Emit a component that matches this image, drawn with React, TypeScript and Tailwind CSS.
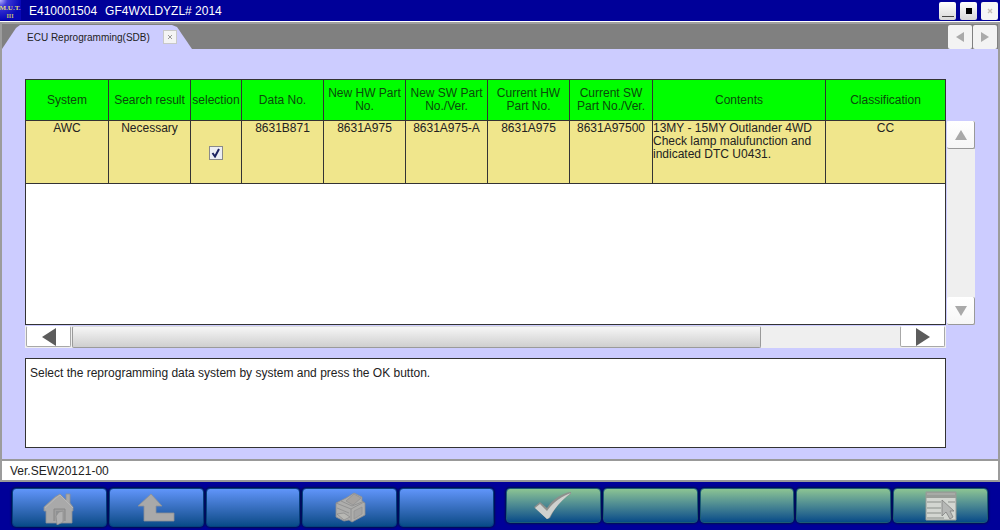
import type { ReactNode } from "react";

const columns = [
  { label: "System", width: "w-[83px]" },
  { label: "Search result", width: "w-[82px]" },
  { label: "selection", width: "w-[51px]" },
  { label: "Data No.", width: "w-[82px]" },
  { label: "New HW Part No.", width: "w-[82px]" },
  { label: "New SW Part No./Ver.", width: "w-[82px]" },
  { label: "Current HW Part No.", width: "w-[82px]" },
  { label: "Current SW Part No./Ver.", width: "w-[83px]" },
  { label: "Contents", width: "w-auto" },
  { label: "Classification", width: "w-[119px]" },
];

const rows = [
  {
    system: "AWC",
    result: "Necessary",
    selected: true,
    data: "8631B871",
    newHw: "8631A975",
    newSw: "8631A975-A",
    currentHw: "8631A975",
    currentSw: "8631A97500",
    contents: "13MY - 15MY Outlander 4WD Check lamp malufunction and indicated DTC U0431.",
    classification: "CC",
  },
];

function HomeIcon() {
  return (
    <svg width="32" height="34" viewBox="0 0 32 34" aria-hidden>
      <path d="M23 9V3h4v9l3 4v4h-1v12H3V20H1v-4L12 6l5-3z" fill="#a9a9a9" stroke="#8e9196" strokeWidth=".8" />
      <path d="M2 17 13 7l4-3 13 13" fill="none" stroke="#bcbcbc" strokeWidth=".8" />
      <path d="M11 30V18h11v12" fill="#9f9f9f" stroke="#878787" />
      <path d="M13 30V20h7v10z" fill="#8f9193" />
      <path d="m13 25 3-4 4-1v11l-6 3z" fill="#b1b1b1" stroke="#8c8c8c" strokeWidth=".7" />
    </svg>
  );
}

function ReturnIcon() {
  return (
    <svg width="38" height="30" viewBox="0 0 38 30" aria-hidden>
      <path d="M14 1 25 13h-6v7h18v8H7V13H1z" fill="#a9a9a9" stroke="#8d9096" strokeWidth=".8" />
    </svg>
  );
}

function PrinterIcon() {
  return (
    <svg width="32" height="32" viewBox="0 0 32 32" aria-hidden>
      <path d="m2 11 10-5 8-5 8 4v4l3 2v12l-13 7-3-2-5 1-8-4z" fill="#aeaeac" stroke="#8b8d90" strokeWidth=".8" />
      <path d="m12 9 8-7 7 4-8 7z" fill="#a6a3a0" stroke="#929292" strokeWidth=".8" />
      <path d="m2 11 15 6 13-7M17 17v12M7 9l11 5 10-4" fill="none" stroke="#8c8c8c" strokeWidth=".8" />
      <path d="m20 19 8-4v7l-8 5z" fill="#a4a4a4" stroke="#969696" strokeWidth=".8" />
      <path d="m3 16 12 5M3 22l7-1 6 4-6 3z" fill="#b8b8b4" stroke="#8e8e8e" strokeWidth=".8" />
    </svg>
  );
}

function CheckIcon() {
  return (
    <svg width="40" height="30" viewBox="0 0 40 30" className="-translate-y-px" aria-hidden>
      <path d="M1 17 7 12l7 6C20 9 29 3 38 2v2C29 9 22 17 17 28l-3 1z" fill="#8d908c" />
      <path d="m2 18 5-4 7 7C20 12 29 6 38 3 30 9 22 17 16 28l-2 1z" fill="#cfd1ce" />
    </svg>
  );
}

function ListIcon() {
  return (
    <svg width="32" height="30" viewBox="0 0 32 30" aria-hidden>
      <path d="M1 1h30v28H1z" fill="#d3d6d1" stroke="#969b96" />
      <path d="M1 1h30v6H1z" fill="#999d98" />
      <path d="M2 3h28" stroke="#b6b8b4" />
      <path d="M2 11h14M2 17h14M2 22h14M2 27h17M23 11h7" stroke="#8b8f8b" strokeWidth="1.2" />
      <path d="M17 9v16l4-4 4 7 3-2-3-6h4z" fill="#b5b7b5" stroke="#808280" strokeWidth=".8" />
    </svg>
  );
}

const blueKeys: { name: string; icon?: ReactNode }[] = [
  { name: "Home", icon: <HomeIcon /> },
  { name: "Back", icon: <ReturnIcon /> },
  { name: "Function 3" },
  { name: "Print", icon: <PrinterIcon /> },
  { name: "Function 5" },
];

const greenKeys: { name: string; icon?: ReactNode }[] = [
  { name: "OK", icon: <CheckIcon /> },
  { name: "Function 7" },
  { name: "Function 8" },
  { name: "Function 9" },
  { name: "List", icon: <ListIcon /> },
];

function TitleBar() {
  return (
    <header className="flex h-[22px] shrink-0 items-center border-b border-white bg-[#000099] text-white">
      <svg width="21" height="20" viewBox="0 0 21 20" className="self-start" aria-hidden>
        <defs>
          <radialGradient id="glow" cx="0" cy="0" r="1">
            <stop offset="0" stopColor="#b9b4ff" />
            <stop offset=".35" stopColor="#3c38d8" />
            <stop offset="1" stopColor="#0808b8" />
          </radialGradient>
        </defs>
        <rect width="21" height="20" fill="url(#glow)" />
        <text x="10" y="10" textAnchor="middle" fontFamily="Liberation Serif, serif" fontWeight="700" fontSize="7" fill="#e0da7c">
          M.U.T.
        </text>
        <text x="10" y="18" textAnchor="middle" fontFamily="Liberation Serif, serif" fontWeight="700" fontSize="6" fill="#c9c46a">
          III
        </text>
      </svg>
      <h1 className="ml-2 flex gap-2 text-xs">
        <span>E410001504</span>
        <span>GF4WXLDYZL# 2014</span>
      </h1>
      <div className="ml-auto flex gap-1 pr-0.5">
        <button aria-label="Minimize" className="flex h-[18px] w-[17px] items-end justify-center rounded-xs bg-linear-to-b from-white to-[#d8d8d8] pb-[3px]">
          <span className="h-px w-3 bg-[#444]" />
        </button>
        <button aria-label="Maximize" className="grid h-[18px] w-[17px] place-items-center rounded-xs bg-linear-to-b from-white to-[#d8d8d8]">
          <span className="size-1.5 bg-black" />
        </button>
        <button aria-label="Close" className="grid h-[18px] w-[17px] place-items-center rounded-xs bg-[#f6f6f6]">
          <svg width="6" height="6" viewBox="0 0 6 6" aria-hidden>
            <path d="m1 1 4 4M5 1 1 5" stroke="#c6c0b8" strokeWidth="1.4" />
          </svg>
        </button>
      </div>
    </header>
  );
}

function TabBar() {
  return (
    <nav className="flex h-[27px] shrink-0 items-end justify-between border-t-2 border-[#a0a0a0] bg-[#808080]">
      <div className="flex h-6 w-[190px] items-center justify-between bg-[#ccccff] pr-[15px] pl-[25px] [clip-path:polygon(0_100%,14px_3px,18px_0,170px_0,175px_2px,100%_100%)]">
        <a href="#sdb" className="text-[10px] text-[#222]">
          ECU Reprogramming(SDB)
        </a>
        <button aria-label="Close tab" className="grid size-3.5 place-items-center border border-[#c8c8c8] bg-[#f4f4f4]">
          <svg width="6" height="6" viewBox="0 0 6 6" aria-hidden>
            <path d="m1 1 4 4M5 1 1 5" stroke="#999" />
          </svg>
        </button>
      </div>
      <div className="flex gap-px pr-px">
        <button aria-label="Previous tab" className="grid size-6 place-items-center rounded-xs bg-[#f3f3f3]">
          <svg width="8" height="10" viewBox="0 0 8 10" aria-hidden>
            <path d="M8 0v10L0 5z" fill="#aaa" />
          </svg>
        </button>
        <button aria-label="Next tab" className="grid size-6 place-items-center rounded-xs bg-[#f3f3f3]">
          <svg width="8" height="10" viewBox="0 0 8 10" aria-hidden>
            <path d="M0 0v10l8-5z" fill="#aaa" />
          </svg>
        </button>
      </div>
    </nav>
  );
}

function DataTable() {
  return (
    <table className="w-full table-fixed border-separate border-spacing-0 text-center text-xs leading-[13px]">
      <thead>
        <tr className="h-[41px] bg-[#00ff00] text-[#0b4a0b]">
          {columns.map((c) => (
            <th key={c.label} scope="col" className={`border-r border-b border-[#333] p-0 font-normal last:border-r-0 ${c.width}`}>
              {c.label}
            </th>
          ))}
        </tr>
      </thead>
      <tbody>
        {rows.map((r) => (
          <tr
            key={r.data}
            className="h-[63px] bg-[#f0e68c] align-top text-[#222] [&>td]:border-r [&>td]:border-b [&>td]:border-[#333] [&>td]:p-0 [&>td]:pt-px [&>td:last-child]:border-r-0"
          >
            <td>{r.system}</td>
            <td>{r.result}</td>
            <td className="align-middle">
              <label className="relative inline-grid size-3.5 place-items-center align-middle">
                <input
                  type="checkbox"
                  aria-label={`Select ${r.data}`}
                  defaultChecked={r.selected}
                  className="peer size-3.5 appearance-none border border-[#8a8a8a] bg-[#eceef4]"
                />
                <svg width="10" height="10" viewBox="0 0 10 10" className="absolute hidden peer-checked:block" aria-hidden>
                  <path d="m1.5 5 2.5 3.5L8 1" fill="none" stroke="#1c2260" strokeWidth="2" />
                </svg>
              </label>
            </td>
            <td>{r.data}</td>
            <td>{r.newHw}</td>
            <td>{r.newSw}</td>
            <td>{r.currentHw}</td>
            <td>{r.currentSw}</td>
            <td className="text-left">{r.contents}</td>
            <td>{r.classification}</td>
          </tr>
        ))}
      </tbody>
    </table>
  );
}

function VerticalScroll() {
  return (
    <div className="mt-[42px] flex w-7 shrink-0 flex-col justify-between bg-[#efefef]">
      <button aria-label="Scroll up" className="grid h-7 place-items-center rounded-xs border-r border-b border-[#999] bg-linear-to-b from-white to-[#f6f6f6]">
        <svg width="12" height="10" viewBox="0 0 12 10" aria-hidden>
          <path d="M6 0 12 10H0z" fill="#a9a9a9" />
        </svg>
      </button>
      <button aria-label="Scroll down" className="grid h-7 place-items-center rounded-xs border-r border-b border-[#999] bg-linear-to-b from-white to-[#f6f6f6]">
        <svg width="12" height="10" viewBox="0 0 12 10" aria-hidden>
          <path d="M0 0h12L6 10z" fill="#a9a9a9" />
        </svg>
      </button>
    </div>
  );
}

function HorizontalScroll() {
  return (
    <div className="mt-px flex h-[22px] shrink-0 justify-between bg-[#efefef] px-px">
      <button aria-label="Scroll left" className="grid h-[21px] w-[45px] place-items-center rounded-xs border border-[#a8a8a8] border-t-white bg-white">
        <svg width="14" height="18" viewBox="0 0 14 18" aria-hidden>
          <path d="M14 0v18L0 9z" fill="#5c5c5c" />
        </svg>
      </button>
      <div className="mx-px flex-1">
        <div className="h-full w-5/6 rounded-xs border border-[#9a9a9a] border-t-[#ddd] bg-linear-to-b from-[#f6f6f6] to-[#cfcfcf]" />
      </div>
      <button aria-label="Scroll right" className="grid h-[21px] w-[45px] place-items-center rounded-xs border border-[#a8a8a8] border-t-white bg-white">
        <svg width="14" height="18" viewBox="0 0 14 18" aria-hidden>
          <path d="M0 0v18l14-9z" fill="#5c5c5c" />
        </svg>
      </button>
    </div>
  );
}

function FunctionKeys() {
  return (
    <footer className="flex h-12 shrink-0 gap-3 bg-[#000099] px-3 pt-1.5">
      <div className="grid h-[39px] flex-1 grid-cols-5 gap-0.5">
        {blueKeys.map((k) => (
          <button
            key={k.name}
            aria-label={k.name}
            className="grid place-items-center rounded-sm border border-[#06407c] bg-linear-to-b from-[#6095fa] to-[#064b88] shadow-[0_0_2px_1px_#00104f]"
          >
            {k.icon}
          </button>
        ))}
      </div>
      <div className="grid h-[35px] flex-1 grid-cols-5 gap-0.5">
        {greenKeys.map((k) => (
          <button
            key={k.name}
            aria-label={k.name}
            className="grid place-items-center rounded-sm border border-[#1c5c74] bg-linear-to-b from-[#8cc492] to-[#064b88] shadow-[0_0_2px_1px_#00104f]"
          >
            {k.icon}
          </button>
        ))}
      </div>
    </footer>
  );
}

export default function App() {
  return (
    <div className="flex h-screen min-h-[480px] flex-col overflow-hidden bg-[#000099] font-['Liberation_Sans',Arial,sans-serif] text-[#222]">
      <TitleBar />
      <div className="flex min-h-0 flex-1 flex-col border-x-2 border-[#9c9c9c]">
        <TabBar />
        <main id="sdb" className="flex min-h-0 flex-1 flex-col bg-[#ccccff] pt-[30px] pr-[23px] pb-[11px] pl-[23px]">
          <div className="flex min-h-0 flex-1 gap-px">
            <div className="min-w-0 flex-1 border border-[#333] bg-white">
              <DataTable />
            </div>
            <VerticalScroll />
          </div>
          <div className="mr-[29px] flex shrink-0 flex-col gap-2.5">
            <HorizontalScroll />
            <p className="h-[90px] border border-[#333] bg-white px-1 py-1.5 text-xs">
              Select the reprogramming data system by system and press the OK button.
            </p>
          </div>
        </main>
        <div className="flex h-[23px] shrink-0 items-center border-y-2 border-[#999] bg-white px-2 text-xs">Ver.SEW20121-00</div>
      </div>
      <FunctionKeys />
    </div>
  );
}
